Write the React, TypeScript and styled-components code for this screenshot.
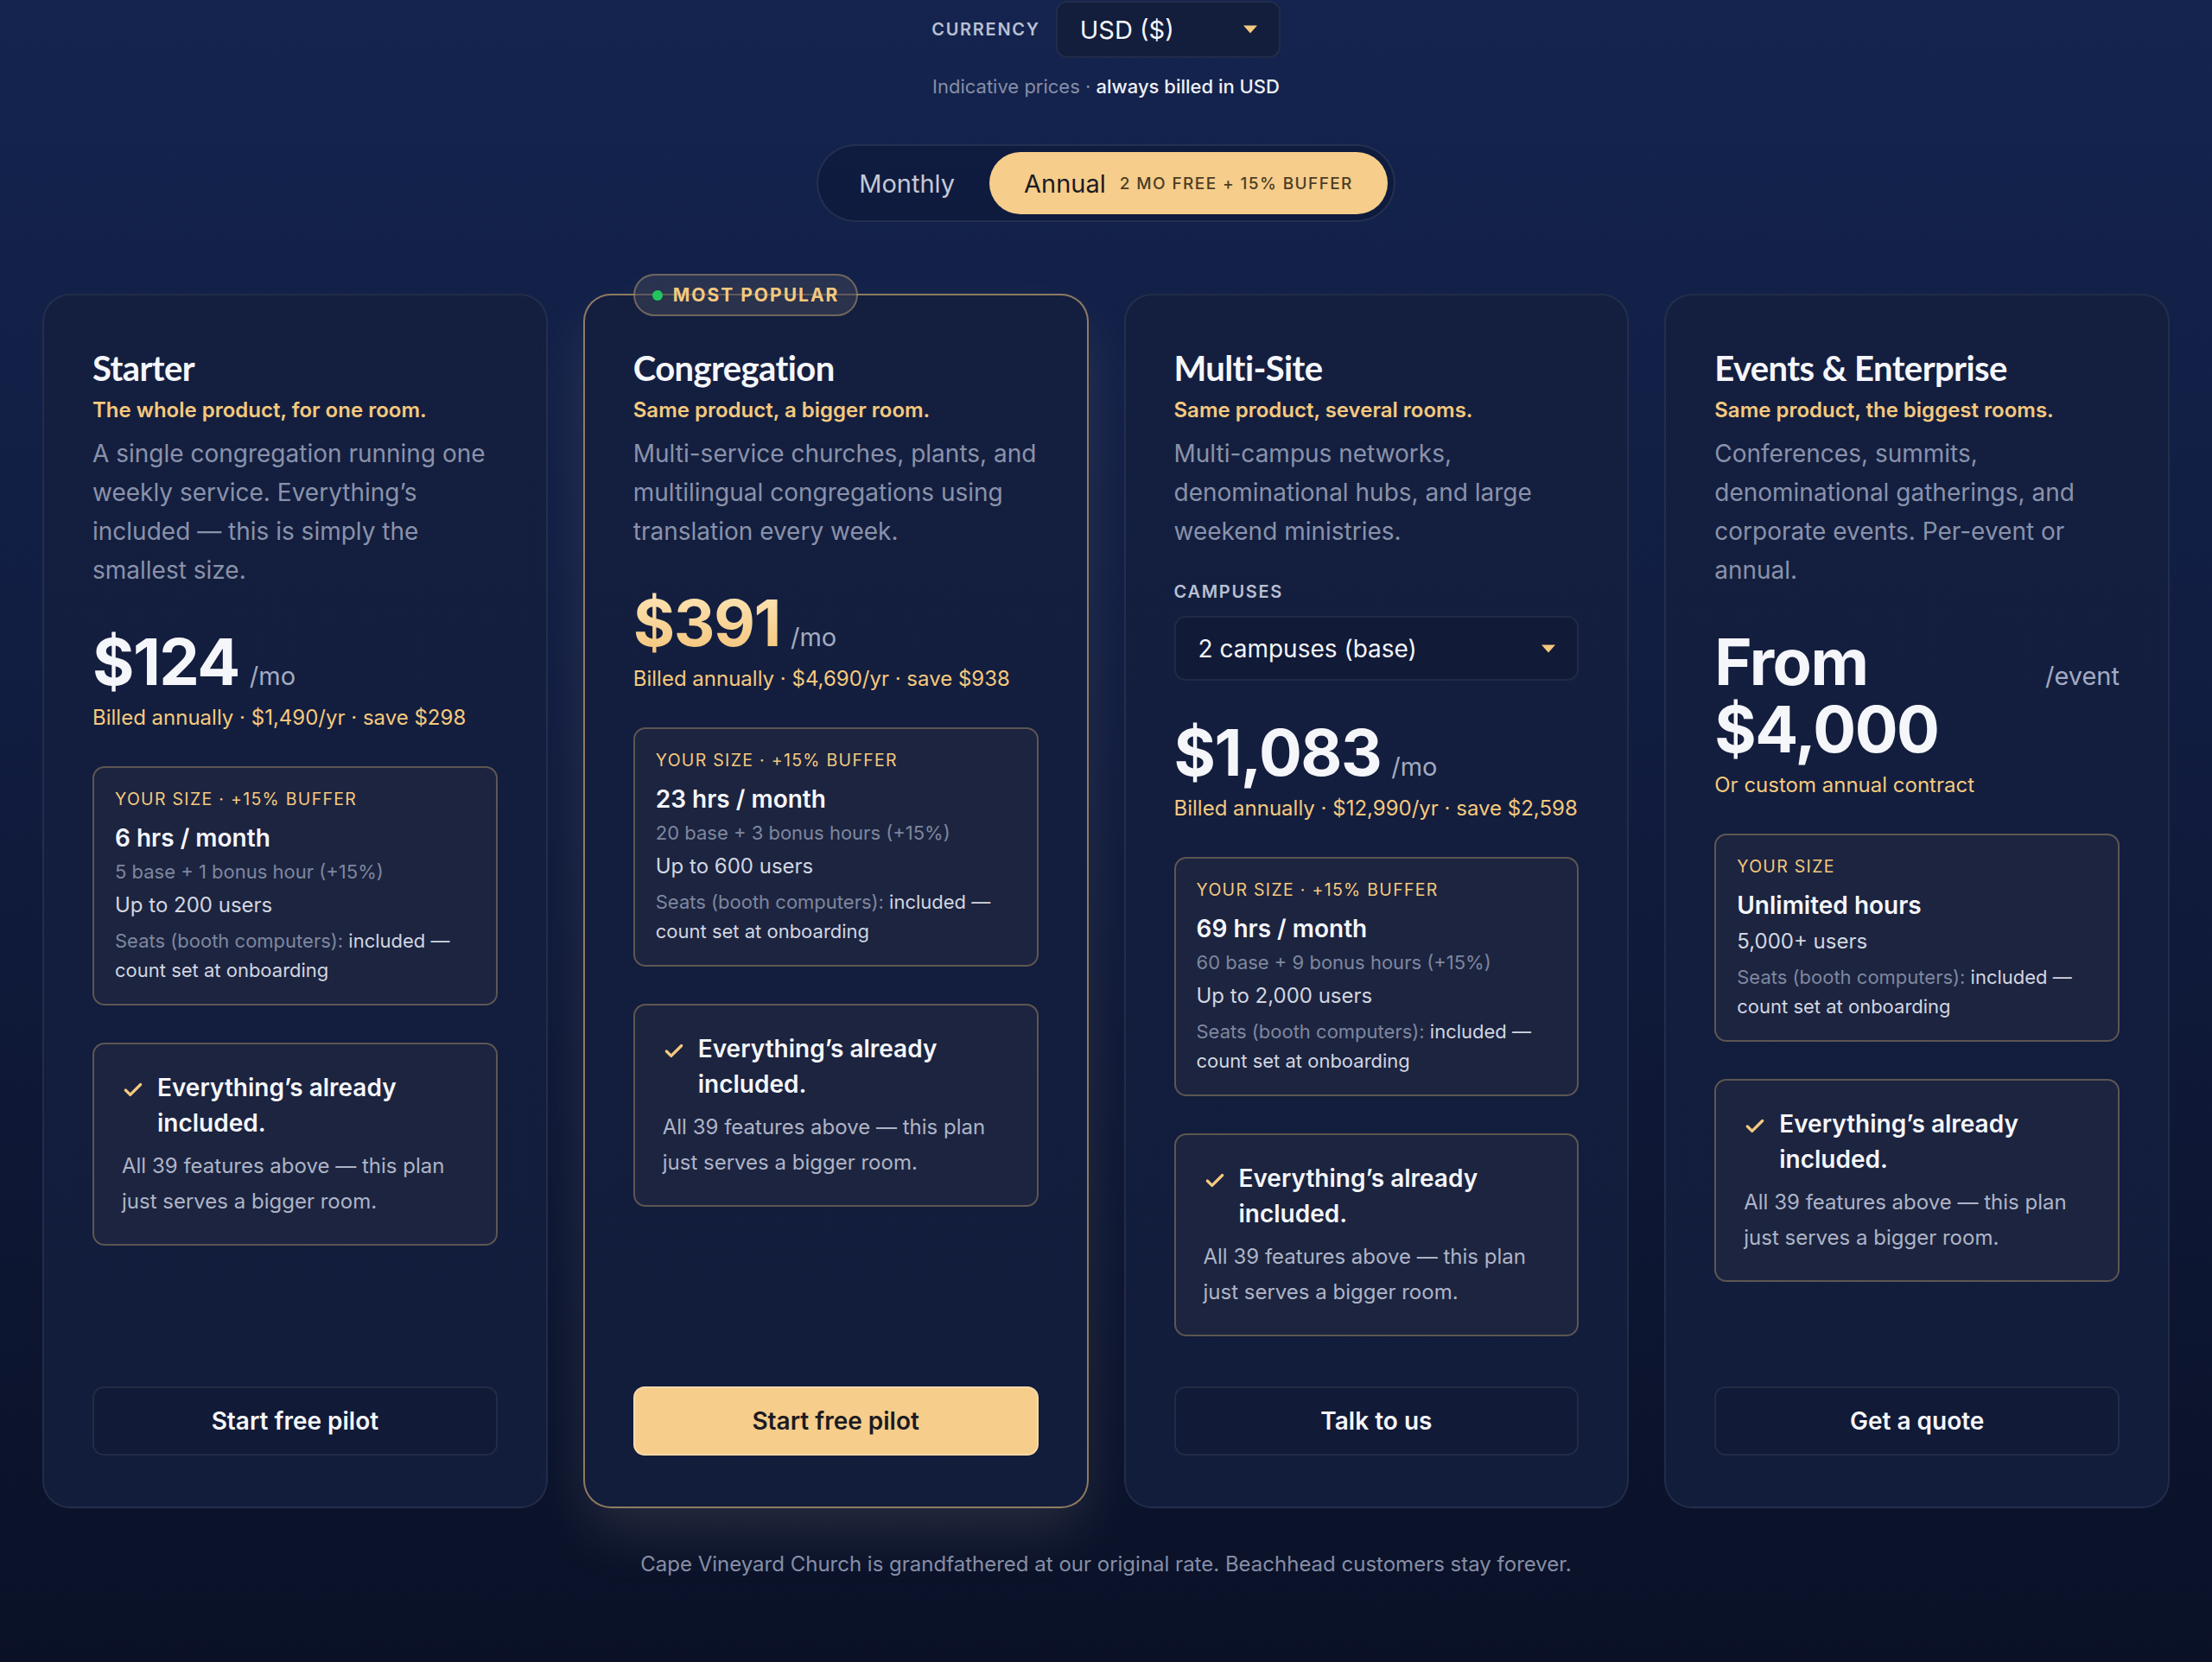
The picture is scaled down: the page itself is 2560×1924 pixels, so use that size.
import styled, {createGlobalStyle} from "styled-components";
import {Check} from "lucide-react";

const GlobalStyle = createGlobalStyle`
  html, body {
    margin: 0;
    padding: 0;
    background: #0a1127;
  }
  body {
    font-family: "Inter", "Noto Sans", sans-serif;
    color: #f5f6fa;
  }
  * {
    box-sizing: border-box;
  }
`

type Plan = {
    name: string;
    tagline: string;
    desc: string;
    price: string;
    unit: string;
    billed: string;
    sizeLabel: string;
    hours: string;
    base?: string;
    users: string;
    cta: string;
    popular?: boolean;
    campuses?: boolean;
}

const plans: Plan[] = [
    {
        name: "Starter",
        tagline: "The whole product, for one room.",
        desc: "A single congregation running one weekly service. Everything’s included — this is simply the smallest size.",
        price: "$124",
        unit: "/mo",
        billed: "Billed annually · $1,490/yr · save $298",
        sizeLabel: "Your size · +15% buffer",
        hours: "6 hrs / month",
        base: "5 base + 1 bonus hour (+15%)",
        users: "Up to 200 users",
        cta: "Start free pilot",
    },
    {
        name: "Congregation",
        tagline: "Same product, a bigger room.",
        desc: "Multi-service churches, plants, and multilingual congregations using translation every week.",
        price: "$391",
        unit: "/mo",
        billed: "Billed annually · $4,690/yr · save $938",
        sizeLabel: "Your size · +15% buffer",
        hours: "23 hrs / month",
        base: "20 base + 3 bonus hours (+15%)",
        users: "Up to 600 users",
        cta: "Start free pilot",
        popular: true,
    },
    {
        name: "Multi-Site",
        tagline: "Same product, several rooms.",
        desc: "Multi-campus networks, denominational hubs, and large weekend ministries.",
        price: "$1,083",
        unit: "/mo",
        billed: "Billed annually · $12,990/yr · save $2,598",
        sizeLabel: "Your size · +15% buffer",
        hours: "69 hrs / month",
        base: "60 base + 9 bonus hours (+15%)",
        users: "Up to 2,000 users",
        cta: "Talk to us",
        campuses: true,
    },
    {
        name: "Events & Enterprise",
        tagline: "Same product, the biggest rooms.",
        desc: "Conferences, summits, denominational gatherings, and corporate events. Per-event or annual.",
        price: "From $4,000",
        unit: "/event",
        billed: "Or custom annual contract",
        sizeLabel: "Your size",
        hours: "Unlimited hours",
        users: "5,000+ users",
        cta: "Get a quote",
    },
]

const Caret = () => (
    <svg width="18" height="10" viewBox="0 0 18 10">
        <path d="M1 0.5 H17 L9 9.5 Z" fill="#f5c97e"/>
    </svg>
)

const App = () => {
    return (
        <Page>
            <GlobalStyle/>
            <CurrencyRow>
                <SmallCaps>Currency</SmallCaps>
                <CurrencySelect>
                    USD ($)
                    <Caret/>
                </CurrencySelect>
            </CurrencyRow>
            <Indicative>
                Indicative prices · <strong>always billed in USD</strong>
            </Indicative>
            <Toggle>
                <ToggleOption>Monthly</ToggleOption>
                <ToggleOption $active>
                    Annual
                    <ToggleNote>2 mo free + 15% buffer</ToggleNote>
                </ToggleOption>
            </Toggle>

            <Grid>
                {plans.map((plan) => (
                    <Card key={plan.name} $popular={plan.popular}>
                        {plan.popular && (
                            <Badge>
                                <Dot/>
                                Most popular
                            </Badge>
                        )}
                        <Title>{plan.name}</Title>
                        <Tagline>{plan.tagline}</Tagline>
                        <Desc>{plan.desc}</Desc>

                        {plan.campuses && (
                            <>
                                <CampusLabel>Campuses</CampusLabel>
                                <CampusSelect>
                                    2 campuses (base)
                                    <Caret/>
                                </CampusSelect>
                            </>
                        )}

                        <PriceRow>
                            <Amount $gold={plan.popular}>{plan.price}</Amount>
                            <Unit>{plan.unit}</Unit>
                        </PriceRow>
                        <Billed>{plan.billed}</Billed>

                        <SizeBox>
                            <SizeLabel>{plan.sizeLabel}</SizeLabel>
                            <Hours>{plan.hours}</Hours>
                            {plan.base && <Base>{plan.base}</Base>}
                            <Users>{plan.users}</Users>
                            <Seats>
                                <span>Seats (booth computers):</span> included — count set at onboarding
                            </Seats>
                        </SizeBox>

                        <IncludedBox>
                            <IncludedHead>
                                <CheckIcon size={26} strokeWidth={3}/>
                                Everything’s already included.
                            </IncludedHead>
                            <IncludedDesc>
                                All 39 features above — this plan just serves a bigger room.
                            </IncludedDesc>
                        </IncludedBox>

                        <ButtonRow>
                            <CtaButton $popular={plan.popular}>{plan.cta}</CtaButton>
                        </ButtonRow>
                    </Card>
                ))}
            </Grid>

            <Footer>
                Cape Vineyard Church is grandfathered at our original rate. Beachhead customers stay forever.
            </Footer>
        </Page>
    );
}

const Page = styled.div`
  min-height: 100vh;
  padding: 1px 49px 80px;
  display: flex;
  flex-direction: column;
  align-items: center;
  background: linear-gradient(180deg, #14244f 0%, #111d41 40%, #0e1734 70%, #0a1127 100%);
`

const CurrencyRow = styled.div`
  display: flex;
  align-items: center;
  gap: 18px;
`

const SmallCaps = styled.div`
  font-size: 20px;
  line-height: 28px;
  font-weight: 600;
  letter-spacing: 1.7px;
  text-transform: uppercase;
  color: #b9c0d2;
`

const CurrencySelect = styled.div`
  width: 260px;
  height: 66px;
  padding: 0 24px 0 26px;
  display: flex;
  align-items: center;
  justify-content: space-between;
  background: #131d3c;
  border: 2px solid rgba(255, 255, 255, 0.07);
  border-radius: 13px;
  font-size: 29px;
  color: #f5f6fa;
`

const Indicative = styled.div`
  margin-top: 17px;
  font-size: 22px;
  line-height: 32px;
  color: #868ea6;

  strong {
    font-weight: 500;
    color: #eef0f6;
  }
`

const Toggle = styled.div`
  margin-top: 51px;
  display: flex;
  padding: 7px;
  border: 2px solid rgba(255, 255, 255, 0.09);
  border-radius: 999px;
  background: rgba(8, 14, 34, 0.3);
`

const ToggleOption = styled.div<{ $active?: boolean }>`
  height: 72px;
  padding: 0 40px;
  display: flex;
  align-items: center;
  gap: 16px;
  border-radius: 999px;
  font-size: 29px;
  color: ${({$active}) => ($active ? "#1b1b24" : "#c3c9d8")};
  background: ${({$active}) => ($active ? "#f6cd8b" : "transparent")};
`

const ToggleNote = styled.span`
  font-size: 19px;
  letter-spacing: 1.4px;
  font-weight: 500;
  text-transform: uppercase;
  color: #4b3d24;
`

const Grid = styled.div`
  margin-top: 83px;
  width: 100%;
  display: grid;
  grid-template-columns: repeat(4, minmax(0, 1fr));
  gap: 41px;
`

const Card = styled.div<{ $popular?: boolean }>`
  position: relative;
  display: flex;
  flex-direction: column;
  padding: 58px 56px 59px;
  border-radius: 32px;
  border: 2px solid ${({$popular}) => ($popular ? "rgba(245, 201, 126, 0.55)" : "rgba(255, 255, 255, 0.07)")};
  background: linear-gradient(180deg, #141f40 0%, #121c3b 100%);
  box-shadow: ${({$popular}) => ($popular ? "0 30px 70px -10px rgba(210, 200, 180, 0.16)" : "none")};
`

const Badge = styled.div`
  position: absolute;
  top: -25px;
  left: 56px;
  height: 49px;
  padding: 0 20px;
  display: flex;
  align-items: center;
  gap: 12px;
  border-radius: 999px;
  background: rgba(60, 66, 86, 0.55);
  border: 2px solid rgba(245, 201, 126, 0.35);
  font-size: 21px;
  font-weight: 700;
  letter-spacing: 2px;
  text-transform: uppercase;
  color: #f5c97e;
`

const Dot = styled.span`
  width: 12px;
  height: 12px;
  border-radius: 50%;
  background: #22c55e;
`

const Title = styled.h2`
  margin: 0;
  font-family: "Lato", "Inter", sans-serif;
  font-size: 40px;
  line-height: 52px;
  font-weight: 700;
  letter-spacing: -0.6px;
  color: #f5f6fa;
`

const Tagline = styled.div`
  margin-top: 6px;
  font-size: 24px;
  line-height: 34px;
  font-weight: 600;
  color: #f5c97e;
`

const Desc = styled.p`
  margin: 11px 0 0;
  font-size: 28px;
  line-height: 45px;
  color: #8a92aa;
`

const CampusLabel = styled(SmallCaps)`
  margin-top: 33px;
`

const CampusSelect = styled.div`
  margin-top: 14px;
  height: 75px;
  padding: 0 24px 0 26px;
  display: flex;
  align-items: center;
  justify-content: space-between;
  background: #111a37;
  border: 2px solid rgba(255, 255, 255, 0.07);
  border-radius: 13px;
  font-size: 28px;
  color: #f5f6fa;
`

const PriceRow = styled.div`
  margin-top: 44px;
  display: flex;
  align-items: baseline;
  gap: 12px;
`

const Amount = styled.div<{ $gold?: boolean }>`
  font-size: 74px;
  line-height: 78px;
  font-weight: 700;
  letter-spacing: -1.5px;
  color: #f5f6fa;
  ${({$gold}) => $gold && `
    background: linear-gradient(180deg, #fde5b6 0%, #f4c47a 100%);
    -webkit-background-clip: text;
    background-clip: text;
    color: transparent;
  `}
`

const Unit = styled.span`
  font-size: 29px;
  color: #a3abc1;
  white-space: nowrap;
`

const Billed = styled.div`
  margin-top: 8px;
  font-size: 24px;
  line-height: 36px;
  color: #f5c97e;
  white-space: nowrap;
`

const Panel = styled.div`
  border: 2px solid rgba(245, 201, 126, 0.3);
  border-radius: 14px;
  background: #1c2440;
`

const SizeBox = styled(Panel)`
  margin-top: 38px;
  padding: 22px 24px 22px;
`

const SizeLabel = styled.div`
  font-size: 19.5px;
  line-height: 28px;
  letter-spacing: 1.3px;
  text-transform: uppercase;
  color: #f5c97e;
`

const Hours = styled.div`
  margin-top: 12px;
  font-size: 28px;
  line-height: 38px;
  font-weight: 600;
  color: #f5f6fa;
`

const Base = styled.div`
  margin-top: 4px;
  font-size: 22px;
  line-height: 32px;
  color: #7f879e;
`

const Users = styled.div`
  margin-top: 6px;
  font-size: 24px;
  line-height: 34px;
  color: #d2d6e0;
`

const Seats = styled.div`
  margin-top: 7px;
  font-size: 22px;
  line-height: 34px;
  color: #d2d6e0;

  span {
    color: #7f879e;
  }
`

const IncludedBox = styled(Panel)`
  margin-top: 43px;
  padding: 30px 32px 29px;
`

const IncludedHead = styled.div`
  display: flex;
  align-items: flex-start;
  gap: 15px;
  font-size: 28px;
  line-height: 41px;
  font-weight: 600;
  color: #f5f6fa;
`

const CheckIcon = styled(Check)`
  flex-shrink: 0;
  margin-top: 10px;
  color: #f5c97e;
`

const IncludedDesc = styled.div`
  margin-top: 8px;
  font-size: 24px;
  line-height: 41px;
  color: #aeb4c6;
`

const ButtonRow = styled.div`
  margin-top: auto;
  padding-top: 58px;
`

const CtaButton = styled.button<{ $popular?: boolean }>`
  width: 100%;
  height: 80px;
  border-radius: 13px;
  font-family: "Inter", sans-serif;
  font-size: 28px;
  font-weight: 600;
  cursor: pointer;
  color: ${({$popular}) => ($popular ? "#1c1b22" : "#f5f6fa")};
  background: ${({$popular}) => ($popular ? "#f6cd8b" : "#111a36")};
  border: 2px solid ${({$popular}) => ($popular ? "rgba(255, 255, 255, 0.25)" : "rgba(255, 255, 255, 0.08)")};
`

const Footer = styled.div`
  margin-top: 48px;
  font-size: 24px;
  line-height: 34px;
  color: #868ea6;
  text-align: center;
`

export default App;
